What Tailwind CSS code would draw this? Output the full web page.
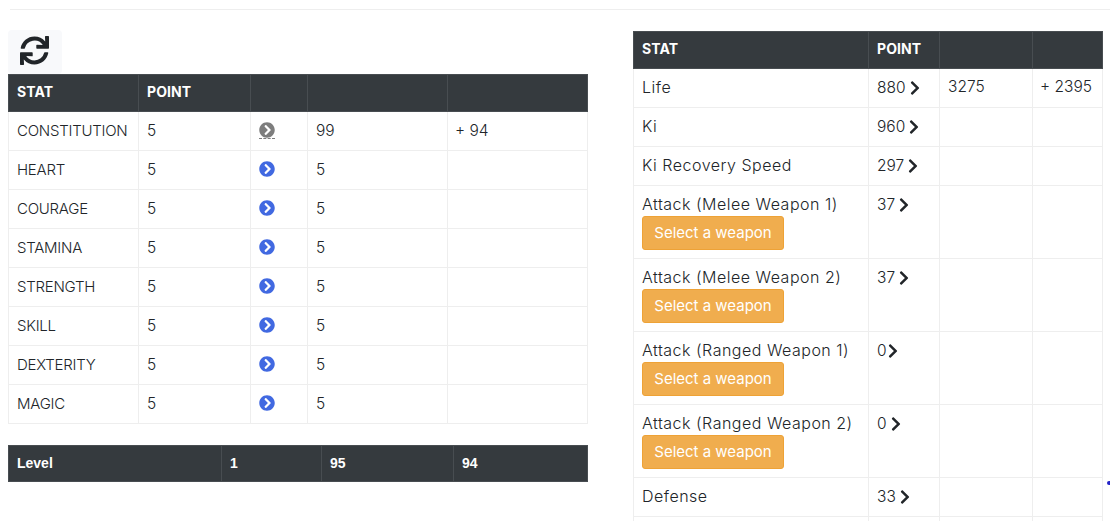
<!DOCTYPE html>
<html lang="en">
<head>
    <meta charset="UTF-8">
    <meta name="viewport" content="width=device-width, initial-scale=1.0">
    <title>Stats</title>
    <script src="https://cdn.jsdelivr.net/npm/@tailwindcss/browser@4"></script>
</head>
<body class="relative h-[521px] overflow-hidden bg-white font-['Inter',sans-serif] text-[15.5px] font-[350] text-[#212529]">
    <hr class="ml-[10px] mt-[9px] border-t border-[#eeeeee]">

    <div class="flex pl-2 pr-[7px]">
        <!-- left side -->
        <div class="w-[580px] pt-5">
            <button class="flex h-11 w-[54px] items-center justify-center rounded-sm bg-[#f8f9fb] pb-[3px] pr-[2px]">
                <svg class="h-[29px] w-[29px] text-[#212529]" viewBox="0 0 512 512" fill="currentColor"><path d="M440.65 12.57l4 82.77A247.16 247.16 0 0 0 255.83 8C134.73 8 33.91 94.92 12.29 209.82A12 12 0 0 0 24.09 224h49.05a12 12 0 0 0 11.67-9.26 175.91 175.91 0 0 1 317-56.94l-101.46-4.86a12 12 0 0 0-12.57 12v47.41a12 12 0 0 0 12 12H500a12 12 0 0 0 12-12V12a12 12 0 0 0-12-12h-47.37a12 12 0 0 0-11.98 12.57zM255.83 432a175.61 175.61 0 0 1-146-77.8l101.8 4.87a12 12 0 0 0 12.57-12v-47.4a12 12 0 0 0-12-12H12a12 12 0 0 0-12 12V500a12 12 0 0 0 12 12h47.35a12 12 0 0 0 12-12.6l-4.15-82.57A247.17 247.17 0 0 0 255.83 504c121.11 0 221.93-86.92 243.55-201.82a12 12 0 0 0-11.8-14.18h-49.05a12 12 0 0 0-11.67 9.26A175.86 175.86 0 0 1 255.83 432z"/></svg>
            </button>

            <table class="w-[580px] table-fixed border-collapse">
                <thead>
                    <tr class="h-[37px] bg-[#353a3e] text-left text-sm font-bold tracking-[0.1px] text-white">
                        <th class="w-[130px] border border-[#484d51] pb-[2px] pl-2">STAT</th>
                        <th class="w-[112px] border border-[#484d51] pb-[2px] pl-2">POINT</th>
                        <th class="w-[57px] border border-[#484d51]"></th>
                        <th class="w-[140px] border border-[#484d51]"></th>
                        <th class="border border-[#484d51]"></th>
                    </tr>
                </thead>
                <tbody>
                    <tr class="h-[39px]">
                        <td class="border border-[#eeeeee] pl-2 text-[15px] tracking-[-0.25px]">CONSTITUTION</td>
                        <td class="border border-[#eeeeee] pl-2">5</td>
                        <td class="border border-[#eeeeee] pb-[2px] pl-2">
                            <svg class="h-[17px] w-4 border-b border-dashed border-[#7d7d7d] text-[#7d7d7d]" viewBox="0 0 512 512" fill="currentColor"><path d="M256 8c137 0 248 111 248 248S393 504 256 504 8 393 8 256 119 8 256 8zm113.9 231L234.4 103.5c-9.4-9.4-24.6-9.4-33.9 0l-17 17c-9.4 9.4-9.4 24.6 0 33.9L285.1 256 183.5 357.6c-9.4 9.4-9.4 24.6 0 33.9l17 17c9.4 9.4 24.6 9.4 33.9 0L369.9 273c9.4-9.4 9.4-24.6 0-34z"/></svg>
                        </td>
                        <td class="border border-[#eeeeee] pl-2">99</td>
                        <td class="border border-[#eeeeee] pl-[7px]">+ 94</td>
                    </tr>
                    <tr class="h-[39px]">
                        <td class="border border-[#eeeeee] pl-2 text-[15px] tracking-[-0.25px]">HEART</td>
                        <td class="border border-[#eeeeee] pl-2">5</td>
                        <td class="border border-[#eeeeee] pb-[2px] pl-2">
                            <svg class="h-4 w-4 text-[#4169e1]" viewBox="0 0 512 512" fill="currentColor"><path d="M256 8c137 0 248 111 248 248S393 504 256 504 8 393 8 256 119 8 256 8zm113.9 231L234.4 103.5c-9.4-9.4-24.6-9.4-33.9 0l-17 17c-9.4 9.4-9.4 24.6 0 33.9L285.1 256 183.5 357.6c-9.4 9.4-9.4 24.6 0 33.9l17 17c9.4 9.4 24.6 9.4 33.9 0L369.9 273c9.4-9.4 9.4-24.6 0-34z"/></svg>
                        </td>
                        <td class="border border-[#eeeeee] pl-2">5</td>
                        <td class="border border-[#eeeeee]"></td>
                    </tr>
                    <tr class="h-[39px]">
                        <td class="border border-[#eeeeee] pl-2 text-[15px] tracking-[-0.25px]">COURAGE</td>
                        <td class="border border-[#eeeeee] pl-2">5</td>
                        <td class="border border-[#eeeeee] pb-[2px] pl-2">
                            <svg class="h-4 w-4 text-[#4169e1]" viewBox="0 0 512 512" fill="currentColor"><path d="M256 8c137 0 248 111 248 248S393 504 256 504 8 393 8 256 119 8 256 8zm113.9 231L234.4 103.5c-9.4-9.4-24.6-9.4-33.9 0l-17 17c-9.4 9.4-9.4 24.6 0 33.9L285.1 256 183.5 357.6c-9.4 9.4-9.4 24.6 0 33.9l17 17c9.4 9.4 24.6 9.4 33.9 0L369.9 273c9.4-9.4 9.4-24.6 0-34z"/></svg>
                        </td>
                        <td class="border border-[#eeeeee] pl-2">5</td>
                        <td class="border border-[#eeeeee]"></td>
                    </tr>
                    <tr class="h-[39px]">
                        <td class="border border-[#eeeeee] pl-2 text-[15px] tracking-[-0.25px]">STAMINA</td>
                        <td class="border border-[#eeeeee] pl-2">5</td>
                        <td class="border border-[#eeeeee] pb-[2px] pl-2">
                            <svg class="h-4 w-4 text-[#4169e1]" viewBox="0 0 512 512" fill="currentColor"><path d="M256 8c137 0 248 111 248 248S393 504 256 504 8 393 8 256 119 8 256 8zm113.9 231L234.4 103.5c-9.4-9.4-24.6-9.4-33.9 0l-17 17c-9.4 9.4-9.4 24.6 0 33.9L285.1 256 183.5 357.6c-9.4 9.4-9.4 24.6 0 33.9l17 17c9.4 9.4 24.6 9.4 33.9 0L369.9 273c9.4-9.4 9.4-24.6 0-34z"/></svg>
                        </td>
                        <td class="border border-[#eeeeee] pl-2">5</td>
                        <td class="border border-[#eeeeee]"></td>
                    </tr>
                    <tr class="h-[39px]">
                        <td class="border border-[#eeeeee] pl-2 text-[15px] tracking-[-0.25px]">STRENGTH</td>
                        <td class="border border-[#eeeeee] pl-2">5</td>
                        <td class="border border-[#eeeeee] pb-[2px] pl-2">
                            <svg class="h-4 w-4 text-[#4169e1]" viewBox="0 0 512 512" fill="currentColor"><path d="M256 8c137 0 248 111 248 248S393 504 256 504 8 393 8 256 119 8 256 8zm113.9 231L234.4 103.5c-9.4-9.4-24.6-9.4-33.9 0l-17 17c-9.4 9.4-9.4 24.6 0 33.9L285.1 256 183.5 357.6c-9.4 9.4-9.4 24.6 0 33.9l17 17c9.4 9.4 24.6 9.4 33.9 0L369.9 273c9.4-9.4 9.4-24.6 0-34z"/></svg>
                        </td>
                        <td class="border border-[#eeeeee] pl-2">5</td>
                        <td class="border border-[#eeeeee]"></td>
                    </tr>
                    <tr class="h-[39px]">
                        <td class="border border-[#eeeeee] pl-2 text-[15px] tracking-[-0.25px]">SKILL</td>
                        <td class="border border-[#eeeeee] pl-2">5</td>
                        <td class="border border-[#eeeeee] pb-[2px] pl-2">
                            <svg class="h-4 w-4 text-[#4169e1]" viewBox="0 0 512 512" fill="currentColor"><path d="M256 8c137 0 248 111 248 248S393 504 256 504 8 393 8 256 119 8 256 8zm113.9 231L234.4 103.5c-9.4-9.4-24.6-9.4-33.9 0l-17 17c-9.4 9.4-9.4 24.6 0 33.9L285.1 256 183.5 357.6c-9.4 9.4-9.4 24.6 0 33.9l17 17c9.4 9.4 24.6 9.4 33.9 0L369.9 273c9.4-9.4 9.4-24.6 0-34z"/></svg>
                        </td>
                        <td class="border border-[#eeeeee] pl-2">5</td>
                        <td class="border border-[#eeeeee]"></td>
                    </tr>
                    <tr class="h-[39px]">
                        <td class="border border-[#eeeeee] pl-2 text-[15px] tracking-[-0.25px]">DEXTERITY</td>
                        <td class="border border-[#eeeeee] pl-2">5</td>
                        <td class="border border-[#eeeeee] pb-[2px] pl-2">
                            <svg class="h-4 w-4 text-[#4169e1]" viewBox="0 0 512 512" fill="currentColor"><path d="M256 8c137 0 248 111 248 248S393 504 256 504 8 393 8 256 119 8 256 8zm113.9 231L234.4 103.5c-9.4-9.4-24.6-9.4-33.9 0l-17 17c-9.4 9.4-9.4 24.6 0 33.9L285.1 256 183.5 357.6c-9.4 9.4-9.4 24.6 0 33.9l17 17c9.4 9.4 24.6 9.4 33.9 0L369.9 273c9.4-9.4 9.4-24.6 0-34z"/></svg>
                        </td>
                        <td class="border border-[#eeeeee] pl-2">5</td>
                        <td class="border border-[#eeeeee]"></td>
                    </tr>
                    <tr class="h-[39px]">
                        <td class="border border-[#eeeeee] pl-2 text-[15px] tracking-[-0.25px]">MAGIC</td>
                        <td class="border border-[#eeeeee] pl-2">5</td>
                        <td class="border border-[#eeeeee] pb-[2px] pl-2">
                            <svg class="h-4 w-4 text-[#4169e1]" viewBox="0 0 512 512" fill="currentColor"><path d="M256 8c137 0 248 111 248 248S393 504 256 504 8 393 8 256 119 8 256 8zm113.9 231L234.4 103.5c-9.4-9.4-24.6-9.4-33.9 0l-17 17c-9.4 9.4-9.4 24.6 0 33.9L285.1 256 183.5 357.6c-9.4 9.4-9.4 24.6 0 33.9l17 17c9.4 9.4 24.6 9.4 33.9 0L369.9 273c9.4-9.4 9.4-24.6 0-34z"/></svg>
                        </td>
                        <td class="border border-[#eeeeee] pl-2">5</td>
                        <td class="border border-[#eeeeee]"></td>
                    </tr>
                </tbody>
            </table>

            <table class="mt-[21px] w-[580px] table-fixed border-collapse font-['Liberation_Sans',sans-serif] text-sm">
                <tr class="h-[36px] bg-[#353a3e] text-left font-bold text-white">
                    <th class="w-[213px] border border-[#484d51] pb-[2px] pl-2">Level</th>
                    <th class="w-[100px] border border-[#484d51] pb-[2px] pl-2">1</th>
                    <th class="w-[132px] border border-[#484d51] pb-[2px] pl-2">95</th>
                    <th class="border border-[#484d51] pb-[2px] pl-2">94</th>
                </tr>
            </table>
        </div>

        <!-- right side -->
        <div class="ml-[45px] w-[470px] pt-[21px]">
            <table class="w-[470px] table-fixed border-collapse">
                <thead>
                    <tr class="h-[37px] bg-[#353a3e] text-left text-sm font-bold tracking-[0.1px] text-white">
                        <th class="w-[235px] border border-[#484d51] pb-[2px] pl-2">STAT</th>
                        <th class="w-[71px] border border-[#484d51] pb-[2px] pl-2">POINT</th>
                        <th class="w-[93px] border border-[#484d51]"></th>
                        <th class="border border-[#484d51]"></th>
                    </tr>
                </thead>
                <tbody>
                    <tr class="h-[39px]">
                        <td class="border border-[#eeeeee] pb-[2px] pl-2 text-base tracking-[0.5px]">Life</td>
                        <td class="border border-[#eeeeee] pl-2"><span class="flex items-center gap-[4px]">880 <svg class="h-4 w-[10px] text-[#212529]" viewBox="0 0 320 512" fill="currentColor"><path d="M285.476 272.971L91.132 467.314c-9.373 9.373-24.569 9.373-33.941 0l-22.667-22.667c-9.357-9.357-9.375-24.522-.04-33.901L188.505 256 34.484 101.255c-9.335-9.379-9.317-24.544.04-33.901l22.667-22.667c9.373-9.373 24.569-9.373 33.941 0L285.475 239.03c9.373 9.372 9.373 24.568.001 33.941z"/></svg></span></td>
                        <td class="border border-[#eeeeee] pb-[2px] pl-2">3275</td>
                        <td class="border border-[#eeeeee] pb-[2px] pl-[7px]">+ 2395</td>
                    </tr>
                    <tr class="h-[39px]">
                        <td class="border border-[#eeeeee] pb-[2px] pl-2 text-base tracking-[0.5px]">Ki</td>
                        <td class="border border-[#eeeeee] pl-2"><span class="flex items-center gap-[4px]">960 <svg class="h-4 w-[10px] text-[#212529]" viewBox="0 0 320 512" fill="currentColor"><path d="M285.476 272.971L91.132 467.314c-9.373 9.373-24.569 9.373-33.941 0l-22.667-22.667c-9.357-9.357-9.375-24.522-.04-33.901L188.505 256 34.484 101.255c-9.335-9.379-9.317-24.544.04-33.901l22.667-22.667c9.373-9.373 24.569-9.373 33.941 0L285.475 239.03c9.373 9.372 9.373 24.568.001 33.941z"/></svg></span></td>
                        <td class="border border-[#eeeeee]"></td>
                        <td class="border border-[#eeeeee]"></td>
                    </tr>
                    <tr class="h-[39px]">
                        <td class="border border-[#eeeeee] pb-[2px] pl-2 text-base tracking-[0.5px]">Ki Recovery Speed</td>
                        <td class="border border-[#eeeeee] pl-2"><span class="flex items-center gap-[4px]">297 <svg class="h-4 w-[10px] text-[#212529]" viewBox="0 0 320 512" fill="currentColor"><path d="M285.476 272.971L91.132 467.314c-9.373 9.373-24.569 9.373-33.941 0l-22.667-22.667c-9.357-9.357-9.375-24.522-.04-33.901L188.505 256 34.484 101.255c-9.335-9.379-9.317-24.544.04-33.901l22.667-22.667c9.373-9.373 24.569-9.373 33.941 0L285.475 239.03c9.373 9.372 9.373 24.568.001 33.941z"/></svg></span></td>
                        <td class="border border-[#eeeeee]"></td>
                        <td class="border border-[#eeeeee]"></td>
                    </tr>
                    <tr class="h-[73px] align-top">
                        <td class="border border-[#eeeeee] px-2 pt-[7px]">
                            <div class="text-base leading-[23px] tracking-[0.5px]">Attack (Melee Weapon 1)</div>
                            <button class="flex h-[34px] w-[142px] items-center justify-center rounded-[3px] border border-[#eea236] bg-[#f0ad4e] text-[15px] font-normal text-white">Select a weapon</button>
                        </td>
                        <td class="border border-[#eeeeee] pl-2 pt-[7px]"><span class="flex h-6 items-center gap-[4px]">37 <svg class="h-4 w-[10px] text-[#212529]" viewBox="0 0 320 512" fill="currentColor"><path d="M285.476 272.971L91.132 467.314c-9.373 9.373-24.569 9.373-33.941 0l-22.667-22.667c-9.357-9.357-9.375-24.522-.04-33.901L188.505 256 34.484 101.255c-9.335-9.379-9.317-24.544.04-33.901l22.667-22.667c9.373-9.373 24.569-9.373 33.941 0L285.475 239.03c9.373 9.372 9.373 24.568.001 33.941z"/></svg></span></td>
                        <td class="border border-[#eeeeee]"></td>
                        <td class="border border-[#eeeeee]"></td>
                    </tr>
                    <tr class="h-[73px] align-top">
                        <td class="border border-[#eeeeee] px-2 pt-[7px]">
                            <div class="text-base leading-[23px] tracking-[0.5px]">Attack (Melee Weapon 2)</div>
                            <button class="flex h-[34px] w-[142px] items-center justify-center rounded-[3px] border border-[#eea236] bg-[#f0ad4e] text-[15px] font-normal text-white">Select a weapon</button>
                        </td>
                        <td class="border border-[#eeeeee] pl-2 pt-[7px]"><span class="flex h-6 items-center gap-[4px]">37 <svg class="h-4 w-[10px] text-[#212529]" viewBox="0 0 320 512" fill="currentColor"><path d="M285.476 272.971L91.132 467.314c-9.373 9.373-24.569 9.373-33.941 0l-22.667-22.667c-9.357-9.357-9.375-24.522-.04-33.901L188.505 256 34.484 101.255c-9.335-9.379-9.317-24.544.04-33.901l22.667-22.667c9.373-9.373 24.569-9.373 33.941 0L285.475 239.03c9.373 9.372 9.373 24.568.001 33.941z"/></svg></span></td>
                        <td class="border border-[#eeeeee]"></td>
                        <td class="border border-[#eeeeee]"></td>
                    </tr>
                    <tr class="h-[73px] align-top">
                        <td class="border border-[#eeeeee] px-2 pt-[7px]">
                            <div class="text-base leading-[23px] tracking-[0.5px]">Attack (Ranged Weapon 1)</div>
                            <button class="flex h-[34px] w-[142px] items-center justify-center rounded-[3px] border border-[#eea236] bg-[#f0ad4e] text-[15px] font-normal text-white">Select a weapon</button>
                        </td>
                        <td class="border border-[#eeeeee] pl-2 pt-[7px]"><span class="flex h-6 items-center gap-[1px]">0 <svg class="h-4 w-[10px] text-[#212529]" viewBox="0 0 320 512" fill="currentColor"><path d="M285.476 272.971L91.132 467.314c-9.373 9.373-24.569 9.373-33.941 0l-22.667-22.667c-9.357-9.357-9.375-24.522-.04-33.901L188.505 256 34.484 101.255c-9.335-9.379-9.317-24.544.04-33.901l22.667-22.667c9.373-9.373 24.569-9.373 33.941 0L285.475 239.03c9.373 9.372 9.373 24.568.001 33.941z"/></svg></span></td>
                        <td class="border border-[#eeeeee]"></td>
                        <td class="border border-[#eeeeee]"></td>
                    </tr>
                    <tr class="h-[73px] align-top">
                        <td class="border border-[#eeeeee] px-2 pt-[7px]">
                            <div class="text-base leading-[23px] tracking-[0.5px]">Attack (Ranged Weapon 2)</div>
                            <button class="flex h-[34px] w-[142px] items-center justify-center rounded-[3px] border border-[#eea236] bg-[#f0ad4e] text-[15px] font-normal text-white">Select a weapon</button>
                        </td>
                        <td class="border border-[#eeeeee] pl-2 pt-[7px]"><span class="flex h-6 items-center gap-[4px]">0 <svg class="h-4 w-[10px] text-[#212529]" viewBox="0 0 320 512" fill="currentColor"><path d="M285.476 272.971L91.132 467.314c-9.373 9.373-24.569 9.373-33.941 0l-22.667-22.667c-9.357-9.357-9.375-24.522-.04-33.901L188.505 256 34.484 101.255c-9.335-9.379-9.317-24.544.04-33.901l22.667-22.667c9.373-9.373 24.569-9.373 33.941 0L285.475 239.03c9.373 9.372 9.373 24.568.001 33.941z"/></svg></span></td>
                        <td class="border border-[#eeeeee]"></td>
                        <td class="border border-[#eeeeee]"></td>
                    </tr>
                    <tr class="h-[39px]">
                        <td class="border border-[#eeeeee] pb-[2px] pl-2 text-base tracking-[0.5px]">Defense</td>
                        <td class="border border-[#eeeeee] pl-2"><span class="flex items-center gap-[4px]">33 <svg class="h-4 w-[10px] text-[#212529]" viewBox="0 0 320 512" fill="currentColor"><path d="M285.476 272.971L91.132 467.314c-9.373 9.373-24.569 9.373-33.941 0l-22.667-22.667c-9.357-9.357-9.375-24.522-.04-33.901L188.505 256 34.484 101.255c-9.335-9.379-9.317-24.544.04-33.901l22.667-22.667c9.373-9.373 24.569-9.373 33.941 0L285.475 239.03c9.373 9.372 9.373 24.568.001 33.941z"/></svg></span></td>
                        <td class="border border-[#eeeeee]"></td>
                        <td class="border border-[#eeeeee]"></td>
                    </tr>
                    <tr class="h-1">
                        <td class="border border-b-0 border-[#eeeeee]"></td>
                        <td class="border border-b-0 border-[#eeeeee]"></td>
                        <td class="border border-b-0 border-[#eeeeee]"></td>
                        <td class="border border-b-0 border-[#eeeeee]"></td>
                    </tr>
                </tbody>
            </table>
        </div>
    </div>

    <!-- stray mark at the window edge -->
    <div class="absolute left-[1107px] top-[481px] h-1 w-[3px] rounded-l-full bg-[#2323c8]"></div>
</body>
</html>
